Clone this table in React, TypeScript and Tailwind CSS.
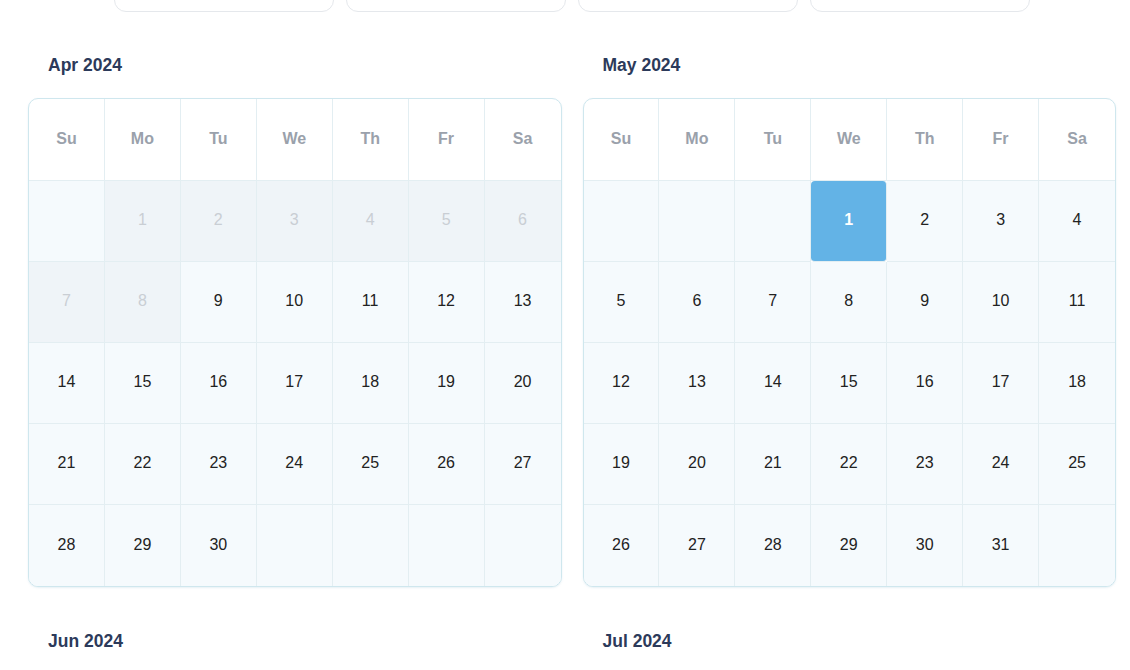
import React from "react"

// Calendar grid for a single month, past days shown as disabled
type Month = {
  label: string
  offset: number
  days: number
  disabledUntil?: number
  selected?: number
}

const WEEK = ["Su", "Mo", "Tu", "We", "Th", "Fr", "Sa"]

const MONTHS: Month[] = [
  { label: "Apr 2024", offset: 1, days: 30, disabledUntil: 8 },
  { label: "May 2024", offset: 3, days: 31, selected: 1 },
  { label: "Jun 2024", offset: 6, days: 30 },
  { label: "Jul 2024", offset: 1, days: 31 },
]

const MonthCard = ({ month }: { month: Month }) => {
  const cells: (number | null)[] = []
  for (let i = 0; i < month.offset; i++) cells.push(null)
  for (let d = 1; d <= month.days; d++) cells.push(d)
  while (cells.length % 7 !== 0) cells.push(null)
  const rows = cells.length / 7

  return (
    <div className="flex flex-col">
      <h3 className="pl-[20px] text-[17.5px] leading-[24px] font-bold text-[#2c3a5a]">{month.label}</h3>

      <div className="mt-[21px] rounded-[10px] border border-[#cfe7ee] bg-white overflow-hidden shadow-[0_1px_2px_rgba(160,200,220,0.25)]">
        <div className="grid grid-cols-7">
          {WEEK.map((w, i) => (
            <div
              key={w}
              className={`h-[82px] pb-[2px] flex items-center justify-center border-b border-[#e3eef2] text-[16px] font-bold text-[#9aa1ab] ${i < 6 ? "border-r" : ""}`}
            >
              {w}
            </div>
          ))}

          {cells.map((d, i) => {
            const col = i % 7
            const row = Math.floor(i / 7)
            const lastRow = row === rows - 1
            const disabled = d !== null && month.disabledUntil !== undefined && d <= month.disabledUntil
            const selected = d !== null && d === month.selected

            let bg = "bg-[#f5fafd]"
            if (disabled) bg = "bg-[#eff4f8]"
            if (selected) bg = "bg-[#63b3e6] rounded-[4px]"

            let text = "text-[#222222]"
            if (disabled) text = "text-[#c9ced4]"
            if (selected) text = "text-white font-semibold"

            return (
              <div
                key={i}
                className={`h-[81px] pb-[2px] flex items-center justify-center text-[16px] border-[#e3eef2] ${col < 6 ? "border-r" : ""} ${!lastRow ? "border-b" : ""} ${bg} ${text}`}
              >
                {d}
              </div>
            )
          })}
        </div>
      </div>
    </div>
  )
}

export default function App() {
  return (
    <div className="h-[670px] bg-white overflow-hidden font-['Liberation_Sans',Arial,sans-serif]">
      <div className="flex justify-center gap-[12px] pl-[14px] -mt-[48px]">
        {[0, 1, 2, 3].map((i) => (
          <div key={i} className="w-[220px] h-[60px] rounded-[12px] border border-[#e5e8ec] bg-white" />
        ))}
      </div>

      <div className="pl-[28px] pr-[14px] mt-[41px] grid grid-cols-2 gap-x-[21px] gap-y-[42px]">
        {MONTHS.map((m) => (
          <MonthCard key={m.label} month={m} />
        ))}
      </div>
    </div>
  )
}
